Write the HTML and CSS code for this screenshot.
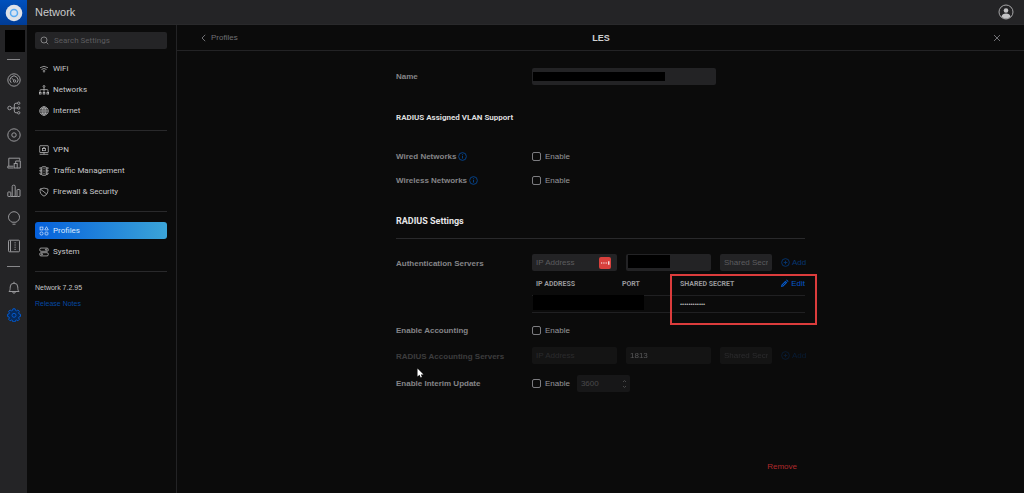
FILE: index.html
```
<!DOCTYPE html>
<html lang="en">
<head>
<meta charset="utf-8">
<title>Network - Profiles</title>
<link rel="stylesheet" href="styles.css">
</head>
<body>
<div class="app">
  <nav class="rail" aria-label="Applications">
    <a class="logo" href="#" aria-label="Home"><svg width="18" height="18" viewBox="0 0 18 18"><circle cx="9" cy="9" r="8.300" fill="#dfe2e8"/><circle cx="9" cy="9" r="3.500" fill="#d5e2f2" stroke="#58aaf2" stroke-width="1.500"/></svg></a>
    <span class="site"></span>
    <span class="dash"></span>
    <div class="rail-list">
      <a href="#" aria-label="Dashboard"><svg class="ico" viewBox="0 0 14 14"><circle cx="7" cy="7" r="6.200"/><path d="M4.200 9.800A4 4 0 1 1 9.800 9.800M4.500 5l2.300 2.200"/><circle cx="7.600" cy="8" r="1.200"/></svg></a>
      <a href="#" aria-label="Topology"><svg class="ico" viewBox="0 0 14 14"><circle cx="2.600" cy="7" r="1.800"/><circle cx="11.700" cy="2.200" r="1.200"/><circle cx="11.700" cy="7" r="1.200"/><circle cx="11.700" cy="11.800" r="1.200"/><path d="M4.400 7h6.100M10.500 2.200H9Q7.300 2.200 7.300 4v6q0 1.800 1.700 1.800h1.500"/></svg></a>
      <a href="#" aria-label="Devices"><svg class="ico" viewBox="0 0 14 14"><circle cx="7" cy="7" r="6.200"/><circle cx="7" cy="7" r="2.200"/></svg></a>
      <a href="#" aria-label="Clients"><svg class="ico" viewBox="0 0 14 14"><path d="M6.500 12H.8v-1.800h1V2.200h11v2.300M1.800 10.200h4.700"/><rect x="7.200" y="7.500" width="3" height="4.500"/><path d="M8.700 7.200V5h4.600v7h-3"/></svg></a>
      <a href="#" aria-label="Statistics"><svg class="ico" viewBox="0 0 14 14"><rect x=".8" y="8" width="3" height="4.500" rx=".5"/><rect x="5.200" y="1.200" width="3" height="11.300" rx="1.200"/><rect x="10" y="5.500" width="3" height="7" rx=".5"/><path d="M3.800 12.500h6.200"/></svg></a>
      <a href="#" aria-label="Insights"><svg class="ico" viewBox="0 0 14 14"><path d="M5 11.200C2.600 10 1.500 8.200 1.500 6.200a5.500 5.500 0 0 1 11 0c0 2-1.100 3.800-3.500 5zM5.500 13.200h3"/></svg></a>
      <a href="#" aria-label="Logs"><svg class="ico" viewBox="0 0 14 14"><rect x="1.500" y="1.200" width="11" height="11.600" rx="1"/><path d="M3.500 1.500v11"/><path d="M7.500 3.800h1.200M7.500 6h1.200M7.500 8.200h1.200M7.500 10.400h1.200"/></svg></a>
    </div>
    <span class="dash"></span>
    <div class="rail-foot">
      <a href="#" aria-label="Notifications"><svg class="ico" viewBox="0 0 14 14"><path d="M2 10.500C3.200 9.300 3.200 8 3.200 6a3.800 3.800 0 0 1 7.600 0c0 2 0 3.300 1.200 4.500zM7 2V.8M5.700 11c.2 1.700 2.400 1.700 2.600 0"/></svg></a>
      <a class="on" href="#" aria-label="Settings"><svg class="ico" viewBox="0 0 14 14"><path d="M5.900 .8h2.200l.4 1.600 1 .4 1.400-.8 1.500 1.500-.8 1.400.4 1 1.500.4v2.200l-1.500.4-.4 1 .8 1.400-1.500 1.500-1.400-.8-1 .4-.4 1.500H5.900l-.4-1.500-1-.4-1.400.8-1.500-1.500.8-1.400-.4-1L.6 8.500V6.300l1.400-.4.4-1-.8-1.400 1.500-1.500 1.400.8 1-.4z"/><circle cx="7" cy="7.300" r="2"/></svg></a>
    </div>
  </nav>

  <div class="page">
    <header class="top">
      <h1>Network</h1>
      <button class="bare" aria-label="Account"><svg width="16" height="16" viewBox="0 0 16 16"><circle cx="8" cy="8" r="7" fill="none" stroke="#a5a5a7"/><circle cx="8" cy="6.500" r="2.300" fill="#c2c2c4"/><path d="M3.500 12.500c.5-2 2-3 4.500-3s4 1 4.500 3C10 15.200 6 15.200 3.500 12.500z" fill="#c2c2c4"/></svg></button>
    </header>

    <div class="columns">
      <aside class="side">
        <label class="search"><svg class="ico" viewBox="0 0 14 14"><circle cx="6.200" cy="6.200" r="4.700"/><path d="M9.800 9.800l3 3"/></svg><input type="search" placeholder="Search Settings" aria-label="Search Settings"></label>
        <nav class="menu" aria-label="Settings">
          <a href="#"><svg class="ico" viewBox="0 0 14 14"><path d="M1.500 5.200q5.500-4 11 0M3.500 7.600q3.500-2.500 7 0M5.300 9.800q1.700-1.300 3.400 0"/><circle cx="7" cy="11" r=".5"/></svg>WiFi</a>
          <a href="#"><svg class="ico" viewBox="0 0 14 14"><circle cx="7" cy="2" r="1.300"/><path d="M7 3.300v7M1.500 10V7.500q0-1 1-1h9q1 0 1 1V10"/><rect x=".5" y="10.300" width="2.400" height="2.400"/><rect x="5.800" y="10.300" width="2.400" height="2.400"/><rect x="11.100" y="10.300" width="2.400" height="2.400"/></svg>Networks</a>
          <a href="#"><svg class="ico" viewBox="0 0 14 14"><circle cx="7" cy="7" r="6"/><ellipse cx="7" cy="7" rx="2.800" ry="6"/><path d="M1 7h12M2 4h10M2 10h10M7 1v12"/></svg>Internet</a>
        </nav>
        <hr>
        <nav class="menu" aria-label="Security">
          <a href="#"><svg class="ico" viewBox="0 0 14 14"><rect x="1" y="1" width="12" height="9.500" rx=".5"/><rect x="5" y="5" width="4" height="3"/><path d="M5.800 5V4q1.200-1.500 2.400 0v1M7 10.500V13M1 13h12"/></svg>VPN</a>
          <a href="#"><svg class="ico" viewBox="0 0 14 14"><rect x="4" y="1" width="6" height="12" rx="1"/><path d="M4 2.500H1l1 2h2M4 6.200H1l1 2h2M4 10H1l1 2h2M10 2.500h3l-1 2h-2M10 6.200h3l-1 2h-2M10 10h3l-1 2h-2M7 2.500v2M7 6v2M7 9.500v2"/></svg>Traffic Management</a>
          <a href="#"><svg class="ico" viewBox="0 0 14 14"><path d="M7 1.500l5.500 1.300c.3 5-1 8-5.500 10C2.500 10.800 1.200 7.800 1.500 2.800zM2 3l9 7"/></svg>Firewall &amp; Security</a>
        </nav>
        <hr>
        <nav class="menu" aria-label="Configuration">
          <a class="active" href="#" aria-current="page"><svg class="ico" viewBox="0 0 14 14"><rect x="1.500" y="1.500" width="4" height="4"/><path d="M10.500 1l2.500 4.500H8z"/><circle cx="3.500" cy="10.500" r="2.200"/><rect x="8.500" y="8.500" width="4" height="4" rx="1"/></svg>Profiles</a>
          <a href="#"><svg class="ico" viewBox="0 0 14 14"><rect x="1" y="1.500" width="12" height="4.500" rx="1.800"/><rect x="1" y="8" width="12" height="4.500" rx="1.800"/><circle cx="10" cy="3.700" r="1"/><circle cx="4" cy="10.200" r="1"/></svg>System</a>
        </nav>
        <hr>
        <p class="version">Network 7.2.95</p>
        <a class="notes" href="#">Release Notes</a>
      </aside>

      <main class="main">
        <div class="crumbs">
          <a href="#"><svg width="5" height="8" viewBox="0 0 5 8"><path d="M4.200.8L1 4l3.200 3.200" fill="none" stroke="currentColor"/></svg>Profiles</a>
          <h2>LES</h2>
          <button class="bare close" aria-label="Close"><svg width="8" height="8" viewBox="0 0 8 8"><path d="M1 1l6 6M7 1L1 7" stroke="currentColor"/></svg></button>
        </div>

        <form class="form">
          <div class="row">
            <label for="name">Name</label>
            <div class="field name"><input id="name" type="text"><span class="mask"></span></div>
          </div>

          <h3 class="sub">RADIUS Assigned VLAN Support</h3>
          <div class="row">
            <span class="label">Wired Networks <svg class="info" viewBox="0 0 10 10"><circle cx="5" cy="5" r="4.300"/><path d="M5 4.300v3M5 2.500v1"/></svg></span>
            <label class="check"><input type="checkbox">Enable</label>
          </div>
          <div class="row wireless">
            <span class="label">Wireless Networks <svg class="info" viewBox="0 0 10 10"><circle cx="5" cy="5" r="4.300"/><path d="M5 4.300v3M5 2.500v1"/></svg></span>
            <label class="check"><input type="checkbox">Enable</label>
          </div>

          <h3 class="section">RADIUS Settings</h3>
          <div class="row">
            <span class="label low">Authentication Servers</span>
            <div class="server">
              <div class="field"><input type="text" placeholder="IP Address" aria-label="IP Address"><svg class="pass" viewBox="0 0 12 12"><rect width="12" height="12" rx="2" fill="#d8403c"/><path d="M2 6h1.200M4.300 6h1.200M6.600 6h1.200M9.800 4.200v3.600" stroke="#fff" stroke-width="1.200"/></svg></div>
              <div class="field port"><input type="text" aria-label="Port"><span class="mask"></span></div>
              <input type="text" placeholder="Shared Secret" aria-label="Shared Secret">
              <button type="button" class="link dim"><svg class="info" viewBox="0 0 10 10"><circle cx="5" cy="5" r="4.300"/><path d="M5 3v4M3 5h4"/></svg>Add</button>
            </div>
          </div>
          <div class="list">
            <table>
              <thead><tr><th class="c1">IP ADDRESS</th><th class="c2">PORT</th><th class="c3">SHARED SECRET</th><th class="c4"><button type="button" class="link"><svg class="pencil" viewBox="0 0 10 10"><path d="M1 9l.6-2.700L6 1.900 8.100 4 3.700 8.400zM6.700 1.200l.8-.7 2 2-.7.8z" fill="currentColor"/><path d="M2.700 7.300l3.400-3.400" stroke="#0b0b0b" stroke-width=".7"/></svg>Edit</button></th></tr></thead>
              <tbody><tr><td></td><td></td><td colspan="2">••••••••••••</td></tr></tbody>
            </table>
            <span class="mask"></span>
            <span class="callout"></span>
          </div>

          <div class="row accounting">
            <span class="label">Enable Accounting</span>
            <label class="check"><input type="checkbox">Enable</label>
          </div>
          <div class="row disabled">
            <span class="label low">RADIUS Accounting Servers</span>
            <div class="server">
              <input type="text" placeholder="IP Address" aria-label="Accounting IP Address" disabled>
              <input class="filled" type="text" value="1813" aria-label="Accounting Port" disabled>
              <input type="text" placeholder="Shared Secret" aria-label="Accounting Shared Secret" disabled>
              <button type="button" class="link dim" disabled><svg class="info" viewBox="0 0 10 10"><circle cx="5" cy="5" r="4.300"/><path d="M5 3v4M3 5h4"/></svg>Add</button>
            </div>
          </div>
          <div class="row interim">
            <span class="label">Enable Interim Update</span>
            <div class="pair">
              <label class="check"><input type="checkbox">Enable</label>
              <div class="field seconds"><input type="text" value="3600" aria-label="Interim update seconds" disabled><svg class="spin" viewBox="0 0 5 10"><path d="M1 3l1.500-1.500L4 3M1 7l1.500 1.500L4 7"/></svg></div>
            </div>
            <svg class="cursor" viewBox="0 0 7 10"><path d="M.5.5v8l2-1.700 1.200 2.700 1.200-.6-1.100-2.500h2.700z" fill="#fff"/></svg>
          </div>
          <button type="button" class="remove">Remove</button>
        </form>
      </main>
    </div>
  </div>
</div>
</body>
</html>
```
FILE: styles.css
```
* { box-sizing: border-box; }
body {
  margin: 0;
  background: #0b0b0b;
  color: #b4b4b6;
  font: 8px/12px "Liberation Sans", Arial, sans-serif;
}
h1, h2, h3, p { margin: 0; }
a { color: inherit; text-decoration: none; }
button, input { font: inherit; color: inherit; }
svg { display: block; flex: none; }
.ico, .info, .spin { fill: none; stroke: currentColor; }

.app { display: flex; min-height: 100vh; }
.page { flex: 1; display: flex; flex-direction: column; min-width: 0; }
.columns { flex: 1; display: flex; border-bottom: 1px solid #222224; }

/* Application rail */
.rail {
  width: 27px;
  background: #242426;
  color: #98989b;
  display: flex;
  flex-direction: column;
  align-items: center;
}
.logo {
  width: 27px;
  height: 25px;
  display: grid;
  place-items: center;
  background: linear-gradient(#0050bd, #003c96);
}
.site { width: 20px; height: 22px; margin: 5px 0 7px 3px; background: #000; }
.dash { width: 13px; height: 1px; background: #88888b; }
.rail .ico { width: 14px; height: 14px; }
.rail-list {
  height: 180px;
  margin: 13px 0;
  display: flex;
  flex-direction: column;
  justify-content: space-between;
}
.rail-foot { margin-top: 14px; display: grid; gap: 13px; }
.rail .on { color: #0559c9; }
.rail .on .ico { fill: #062a5c; }

/* Header */
.top {
  height: 25px;
  padding: 0 10px 0 8px;
  display: flex;
  align-items: center;
  justify-content: space-between;
  background: #242426;
  border-bottom: 1px solid #29292b;
}
h1 { font-size: 11px; font-weight: 400; color: #cacacc; }
.bare { border: 0; padding: 0; background: none; }

/* Settings navigation */
.side {
  width: 150px;
  padding: 7px 9px 0 8px;
  border-right: 1px solid #232325;
}
.search, .menu { font-family: Roboto, "Liberation Sans", sans-serif; }
.search {
  height: 17px;
  padding-left: 5px;
  display: flex;
  align-items: center;
  gap: 5px;
  background: #242426;
  border-radius: 2px;
}
.search .ico { width: 9px; height: 9px; }
.search input { width: 100%; padding: 0; border: 0; outline: 0; background: none; }
input::placeholder { color: #5c5c5f; opacity: 1; }
.menu { display: grid; gap: 4px; }
.search + .menu { margin-top: 11px; }
.menu a {
  height: 17px;
  padding-left: 4px;
  display: flex;
  align-items: center;
  gap: 4px;
  border-radius: 3px;
  color: #c8c8ca;
}
.menu .ico { width: 10px; height: 10px; }
.menu .active { color: #dceaff; background: linear-gradient(90deg, #0560dc, #3ba4d8); }
hr { height: 1px; margin: 11px 0 10px; border: 0; background: #29292b; }
.version { font-size: 7px; color: #c8c8ca; }
.notes { display: block; margin-top: 4px; font-size: 7px; color: #0549a3; }

/* Profile form */
.main { flex: 1; min-width: 0; }
.crumbs {
  height: 26px;
  padding: 0 23px 0 24px;
  display: grid;
  grid-template-columns: 1fr auto 1fr;
  align-items: center;
  border-bottom: 1px solid #232325;
  color: #707074;
}
.crumbs a { display: flex; align-items: center; gap: 5px; }
h2 { font-size: 9px; color: #d0d0d2; }
.close { justify-self: end; }

.form { max-width: 409px; margin: 0 auto; padding: 17px 0 18px; }
.row {
  position: relative;
  display: grid;
  grid-template-columns: 136px 1fr;
  align-items: center;
  min-height: 17px;
  font-weight: 700;
  color: #858588;
}
.label { display: flex; align-items: center; gap: 2px; }
.low { padding-top: 3px; }
.info, .pencil { width: 9px; height: 9px; }
.label .info { color: #064794; }
.form input[type="text"] {
  display: block;
  width: 100%;
  height: 17px;
  padding: 0 4px;
  border: 0;
  border-radius: 2px;
  background: #232325;
  font-weight: 400;
}
.field { position: relative; }
.name { width: 184px; }
.mask { position: absolute; background: #000; }
.name .mask { left: 1px; top: 4px; width: 132px; height: 9px; }
.port .mask { left: 2px; top: 1px; width: 42px; height: 13px; }
.check { display: flex; align-items: center; gap: 4px; font-weight: 400; color: #98989b; }
.check input {
  appearance: none;
  width: 9px;
  height: 9px;
  margin: 0;
  border: 1px solid #7c7c80;
  border-radius: 2px;
}
.sub { margin: 27px 0 24px; font-size: 8px; color: #dededf; font-family: Roboto, sans-serif; }
.wireless { margin-top: 7px; }
.section {
  margin: 26px 0 15px;
  padding-bottom: 11px;
  border-bottom: 1px solid #29292b;
  font: 700 9px/12px Roboto, sans-serif;
  color: #e6e6e8;
}
.server { display: grid; grid-template-columns: 85px 85px 52px auto; gap: 9px; align-items: center; }
.pass { position: absolute; right: 6px; top: 3px; width: 12px; height: 12px; }
.link {
  display: flex;
  align-items: center;
  gap: 2px;
  padding: 0;
  border: 0;
  background: none;
  font-weight: 400;
  color: #0559c9;
}
.server .link { justify-self: end; }
.dim { color: #063672; }

.list { position: relative; margin-left: 136px; }
table { width: 100%; border-collapse: separate; border-spacing: 0; table-layout: fixed; }
th, td { padding: 0; text-align: left; border-bottom: 1px solid #202022; }
th { height: 25px; padding-top: 1px; font: 700 7px/12px Roboto, sans-serif; color: #98989b; }
td { height: 17px; font-size: 6px; line-height: 12px; color: #b4b4b6; }
.c1 { width: 90px; padding-left: 4px; }
.c2 { width: 58px; }
.c3 { width: 100px; }
.c4 .link { margin-left: auto; font: 8px/12px "Liberation Sans", sans-serif; }
.list .mask { left: 1px; top: 24px; width: 111px; height: 15px; }
.callout { position: absolute; left: 138px; top: 3px; right: -12px; height: 51px; border: 2px solid #dc3c3c; }

.accounting { margin-top: 9px; }
.disabled { margin-top: 8px; }
.disabled > * { opacity: 0.4; }
.form .filled { color: #c8c8ca; }
.interim { margin-top: 11px; }
.pair { display: flex; gap: 7px; }
.seconds { width: 53px; opacity: 0.5; }
.spin { position: absolute; right: 3px; top: 4px; width: 5px; height: 10px; }
.cursor { position: absolute; left: 21px; top: -7px; width: 7px; height: 10px; }
.remove {
  display: block;
  margin: 66px 8px 0 auto;
  padding: 0;
  border: 0;
  background: none;
  line-height: 17px;
  color: #b02a2c;
}
```
